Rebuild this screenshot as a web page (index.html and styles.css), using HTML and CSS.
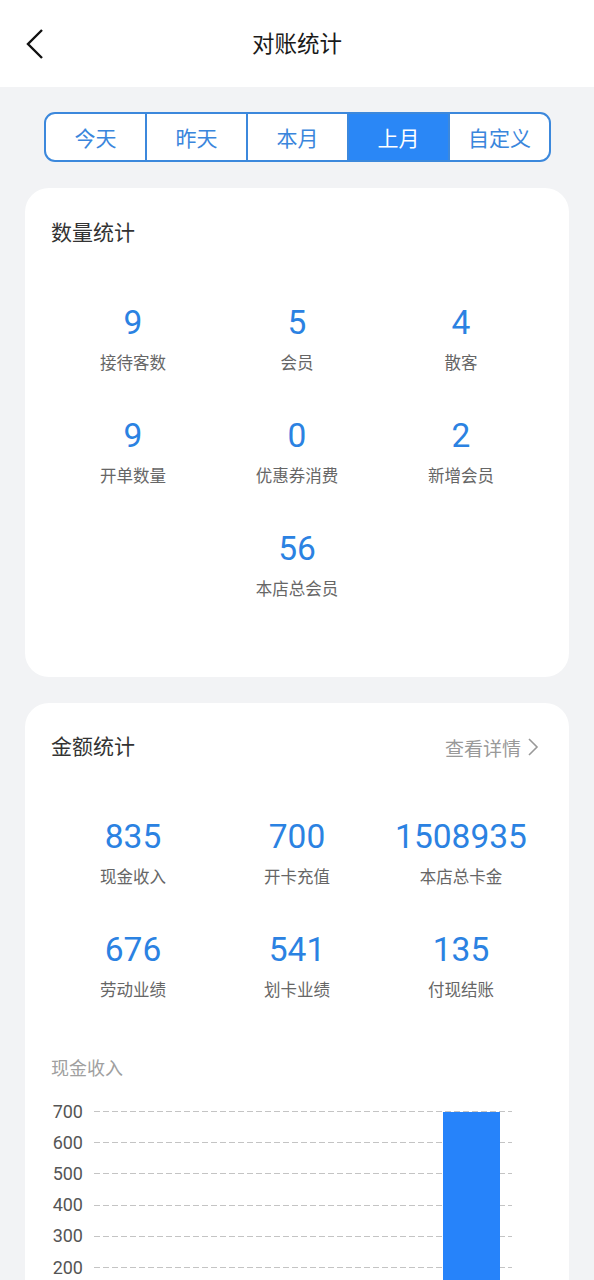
FILE: index.html
```html
<!DOCTYPE html>
<html lang="zh-CN">
<head>
<meta charset="utf-8">
<title>对账统计</title>
<link rel="stylesheet" href="styles.css">
</head>
<body>
<div class="page">
  <header class="topbar">
    <svg class="back" width="20" height="32" viewBox="0 0 20 32"><polyline points="17,2 3,16 17,30" fill="none" stroke="#111" stroke-width="2.4"/></svg>
    <div class="title">对账统计</div>
  </header>

  <div class="seg-wrap">
    <div class="seg">
      <div class="seg-item">今天</div>
      <div class="seg-item">昨天</div>
      <div class="seg-item">本月</div>
      <div class="seg-item active">上月</div>
      <div class="seg-item">自定义</div>
    </div>
  </div>

  <section class="card card-count">
    <div class="card-head"><div class="card-title">数量统计</div></div>
    <div class="grid">
      <div class="cell"><div class="num">9</div><div class="lbl">接待客数</div></div>
      <div class="cell"><div class="num">5</div><div class="lbl">会员</div></div>
      <div class="cell"><div class="num">4</div><div class="lbl">散客</div></div>
      <div class="cell"><div class="num">9</div><div class="lbl">开单数量</div></div>
      <div class="cell"><div class="num">0</div><div class="lbl">优惠券消费</div></div>
      <div class="cell"><div class="num">2</div><div class="lbl">新增会员</div></div>
      <div class="cell span-mid"><div class="num">56</div><div class="lbl">本店总会员</div></div>
    </div>
  </section>

  <section class="card card-money">
    <div class="card-head">
      <div class="card-title">金额统计</div>
      <div class="more">查看详情<svg width="12" height="20" viewBox="0 0 12 20"><polyline points="2,2 10,10 2,18" fill="none" stroke="#999" stroke-width="1.6"/></svg></div>
    </div>
    <div class="grid">
      <div class="cell"><div class="num">835</div><div class="lbl">现金收入</div></div>
      <div class="cell"><div class="num">700</div><div class="lbl">开卡充值</div></div>
      <div class="cell"><div class="num">1508935</div><div class="lbl">本店总卡金</div></div>
      <div class="cell"><div class="num">676</div><div class="lbl">劳动业绩</div></div>
      <div class="cell"><div class="num">541</div><div class="lbl">划卡业绩</div></div>
      <div class="cell"><div class="num">135</div><div class="lbl">付现结账</div></div>
    </div>
    <div class="chart-title">现金收入</div>
    <div class="chart">
      <div class="axis">
        <div class="tick"><span>700</span></div>
        <div class="tick"><span>600</span></div>
        <div class="tick"><span>500</span></div>
        <div class="tick"><span>400</span></div>
        <div class="tick"><span>300</span></div>
        <div class="tick"><span>200</span></div>
      </div>
      <div class="plot">
        <div class="row"><div class="line"></div></div>
        <div class="row"><div class="line"></div></div>
        <div class="row"><div class="line"></div></div>
        <div class="row"><div class="line"></div></div>
        <div class="row"><div class="line"></div></div>
        <div class="row"><div class="line"></div></div>
        <div class="bar"></div>
      </div>
    </div>
  </section>
</div>
</body>
</html>
```

FILE: styles.css
```css
* { box-sizing: border-box; }
html, body { margin: 0; padding: 0; }
body {
  background: #f2f3f5;
  font-family: Roboto, "Noto Sans CJK SC", sans-serif;
  width: 594px;
  height: 1280px;
  overflow: hidden;
}
.page { width: 594px; }

.topbar {
  height: 87px;
  background: #fff;
  display: flex;
  align-items: center;
  justify-content: center;
  position: relative;
}
.back {
  position: absolute;
  left: 25px;
  top: 28px;
}
.title {
  font-size: 22.5px;
  color: #1a1a1a;
  line-height: 30px;
}

.seg-wrap {
  padding: 25px 43px 0 44px;
}
.seg {
  display: flex;
  height: 50px;
  border: 2px solid #3c88dc;
  border-radius: 11px;
  overflow: hidden;
  background: #fff;
}
.seg-item {
  flex: 1;
  display: flex;
  align-items: center;
  justify-content: center;
  font-size: 21px;
  color: #3a86dc;
  border-left: 2px solid #3c88dc;
}
.seg-item:first-child { border-left: none; }
.seg-item.active {
  background: #2a87f6;
  color: #fff;
}

.card {
  margin: 26px 25px 0 25px;
  background: #fff;
  border-radius: 24px;
  padding: 30px 26px 75px 26px;
}
.card-money { padding-top: 29px; padding-bottom: 60px; }
.card-head {
  display: flex;
  justify-content: space-between;
  align-items: center;
  height: 30px;
}
.card-title {
  font-size: 21px;
  color: #333;
  line-height: 30px;
}
.more {
  display: flex;
  align-items: center;
  gap: 6px;
  font-size: 19px;
  color: #999;
  padding-right: 4px;
}

.grid {
  margin-top: 55px;
  display: grid;
  grid-template-columns: repeat(3, 1fr);
  row-gap: 40px;
}
.card-money .grid { margin-top: 55px; }
.cell {
  display: flex;
  flex-direction: column;
  align-items: center;
  gap: 9px;
}
.span-mid { grid-column: 2; }
.num {
  font-size: 33.5px;
  line-height: 40px;
  color: #2b82e2;
}
.lbl {
  font-size: 16.5px;
  line-height: 24px;
  color: #666;
}

.chart-title {
  margin-top: 54px;
  font-size: 18px;
  line-height: 24px;
  color: #a0a0a0;
}
.chart {
  margin-top: 15px;
  display: flex;
  gap: 11px;
}
.axis {
  width: 32px;
  display: flex;
  flex-direction: column;
  align-items: flex-end;
}
.tick {
  height: 31.2px;
  display: flex;
  align-items: center;
}
.tick span {
  font-size: 18px;
  line-height: 20px;
  color: #555;
}
.plot {
  width: 418px;
  position: relative;
}
.row {
  height: 31.2px;
  display: flex;
  align-items: center;
}
.line {
  width: 100%;
  height: 1px;
  background-image: linear-gradient(to right, #c4c4c4 65%, transparent 65%);
  background-size: 9px 1px;
  background-repeat: repeat-x;
}
.bar {
  position: absolute;
  left: 349px;
  width: 57px;
  top: 15.6px;
  height: 300px;
  background: #2683fa;
}
```
